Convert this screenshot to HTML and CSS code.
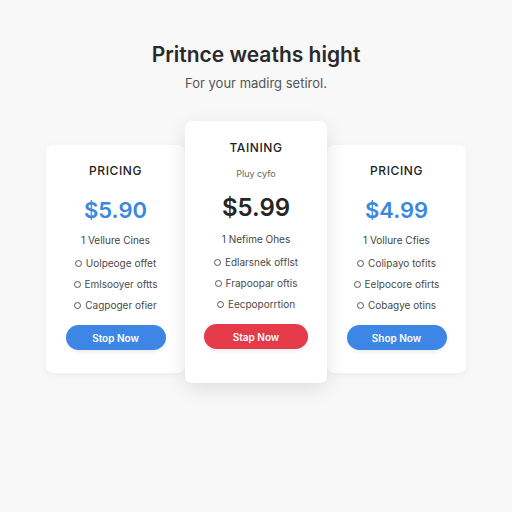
FILE: index.html
```html
<!DOCTYPE html>
<html lang="en">
<head>
    <meta charset="UTF-8">
    <meta name="viewport" content="width=device-width, initial-scale=1.0">
    <title>Pricing</title>
    <link rel="stylesheet" href="styles.css">
</head>
<body>
    <header class="intro">
        <h1>Pritnce weaths hight</h1>
        <p>For your madirg setirol.</p>
    </header>
    <section class="plans">
        <div class="plan side">
            <h2>PRICING</h2>
            <div class="price blue">$5.90</div>
            <div class="lead">1 Vellure Cines</div>
            <ul>
                <li><span class="dot"></span>Uolpeoge offet</li>
                <li><span class="dot"></span>Emlsooyer oftts</li>
                <li><span class="dot"></span>Cagpoger ofier</li>
            </ul>
            <button class="btn blue-btn">Stop Now</button>
        </div>
        <div class="plan featured">
            <h2>TAINING</h2>
            <div class="tag">Pluy cyfo</div>
            <div class="price">$5.99</div>
            <div class="lead">1 Nefime Ohes</div>
            <ul>
                <li><span class="dot"></span>Edlarsnek offlst</li>
                <li><span class="dot"></span>Frapoopar oftis</li>
                <li><span class="dot"></span>Eecpoporrtion</li>
            </ul>
            <button class="btn red-btn">Stap Now</button>
        </div>
        <div class="plan side">
            <h2>PRICING</h2>
            <div class="price blue">$4.99</div>
            <div class="lead">1 Vollure Cfies</div>
            <ul>
                <li><span class="dot"></span>Colipayo tofits</li>
                <li><span class="dot"></span>Eelpocore ofirts</li>
                <li><span class="dot"></span>Cobagye otins</li>
            </ul>
            <button class="btn blue-btn">Shop Now</button>
        </div>
    </section>
</body>
</html>
```

FILE: styles.css
```css
body {
    margin: 0;
    padding: 0;
    background-color: #f8f8f8;
    font-family: Inter, "Liberation Sans", sans-serif;
    color: #333;
    height: 512px;
}
.intro {
    text-align: center;
    padding-top: 42px;
}
.intro h1 {
    margin: 0;
    font-size: 21px;
    line-height: 26px;
    font-weight: 600;
    color: #2a2a2a;
}
.intro p {
    margin: 2px 0 0;
    font-size: 13px;
    line-height: 26px;
    color: #555;
}
.plans {
    display: flex;
    justify-content: center;
    align-items: flex-start;
    margin-top: 25px;
}
.plan {
    background-color: #fff;
    border-radius: 7px;
    text-align: center;
    box-shadow: 0 2px 8px rgba(0, 0, 0, 0.05);
}
.plan.side {
    width: 139px;
    margin-top: 24px;
    padding: 18px 0 23px;
}
.plan.featured {
    width: 142px;
    padding: 19px 0 34px;
    position: relative;
    z-index: 1;
    box-shadow: 0 6px 20px rgba(0, 0, 0, 0.1);
}
.plan h2 {
    margin: 0;
    font-size: 12px;
    line-height: 16px;
    font-weight: 500;
    letter-spacing: 0.6px;
    color: #222;
}
.tag {
    margin-top: 11px;
    font-size: 9px;
    line-height: 14px;
    color: #666;
}
.price {
    margin-top: 16px;
    font-size: 22px;
    line-height: 30px;
    font-weight: 600;
    color: #262626;
}
.featured .price {
    margin-top: 11px;
    font-size: 24px;
    line-height: 32px;
}
.price.blue {
    color: #3a87e2;
}
.lead {
    margin-top: 5px;
    font-size: 10px;
    line-height: 21px;
    color: #444;
}
.plan ul {
    list-style: none;
    margin: 2px 0 0;
    padding: 0;
}
.plan li {
    font-size: 10px;
    line-height: 21px;
    color: #4a4a4a;
    display: flex;
    justify-content: center;
    align-items: center;
    gap: 4px;
}
.dot {
    width: 5px;
    height: 5px;
    border: 1px solid #555;
    border-radius: 50%;
}
.btn {
    margin-top: 9px;
    width: 100px;
    height: 25px;
    border: none;
    border-radius: 13px;
    color: #fff;
    font-family: inherit;
    font-size: 10px;
    font-weight: 600;
    box-shadow: 0 2px 4px rgba(0, 0, 0, 0.08);
}
.featured .btn {
    width: 104px;
}
.blue-btn {
    background-color: #3e86e6;
}
.red-btn {
    background-color: #e43a4a;
}
```
